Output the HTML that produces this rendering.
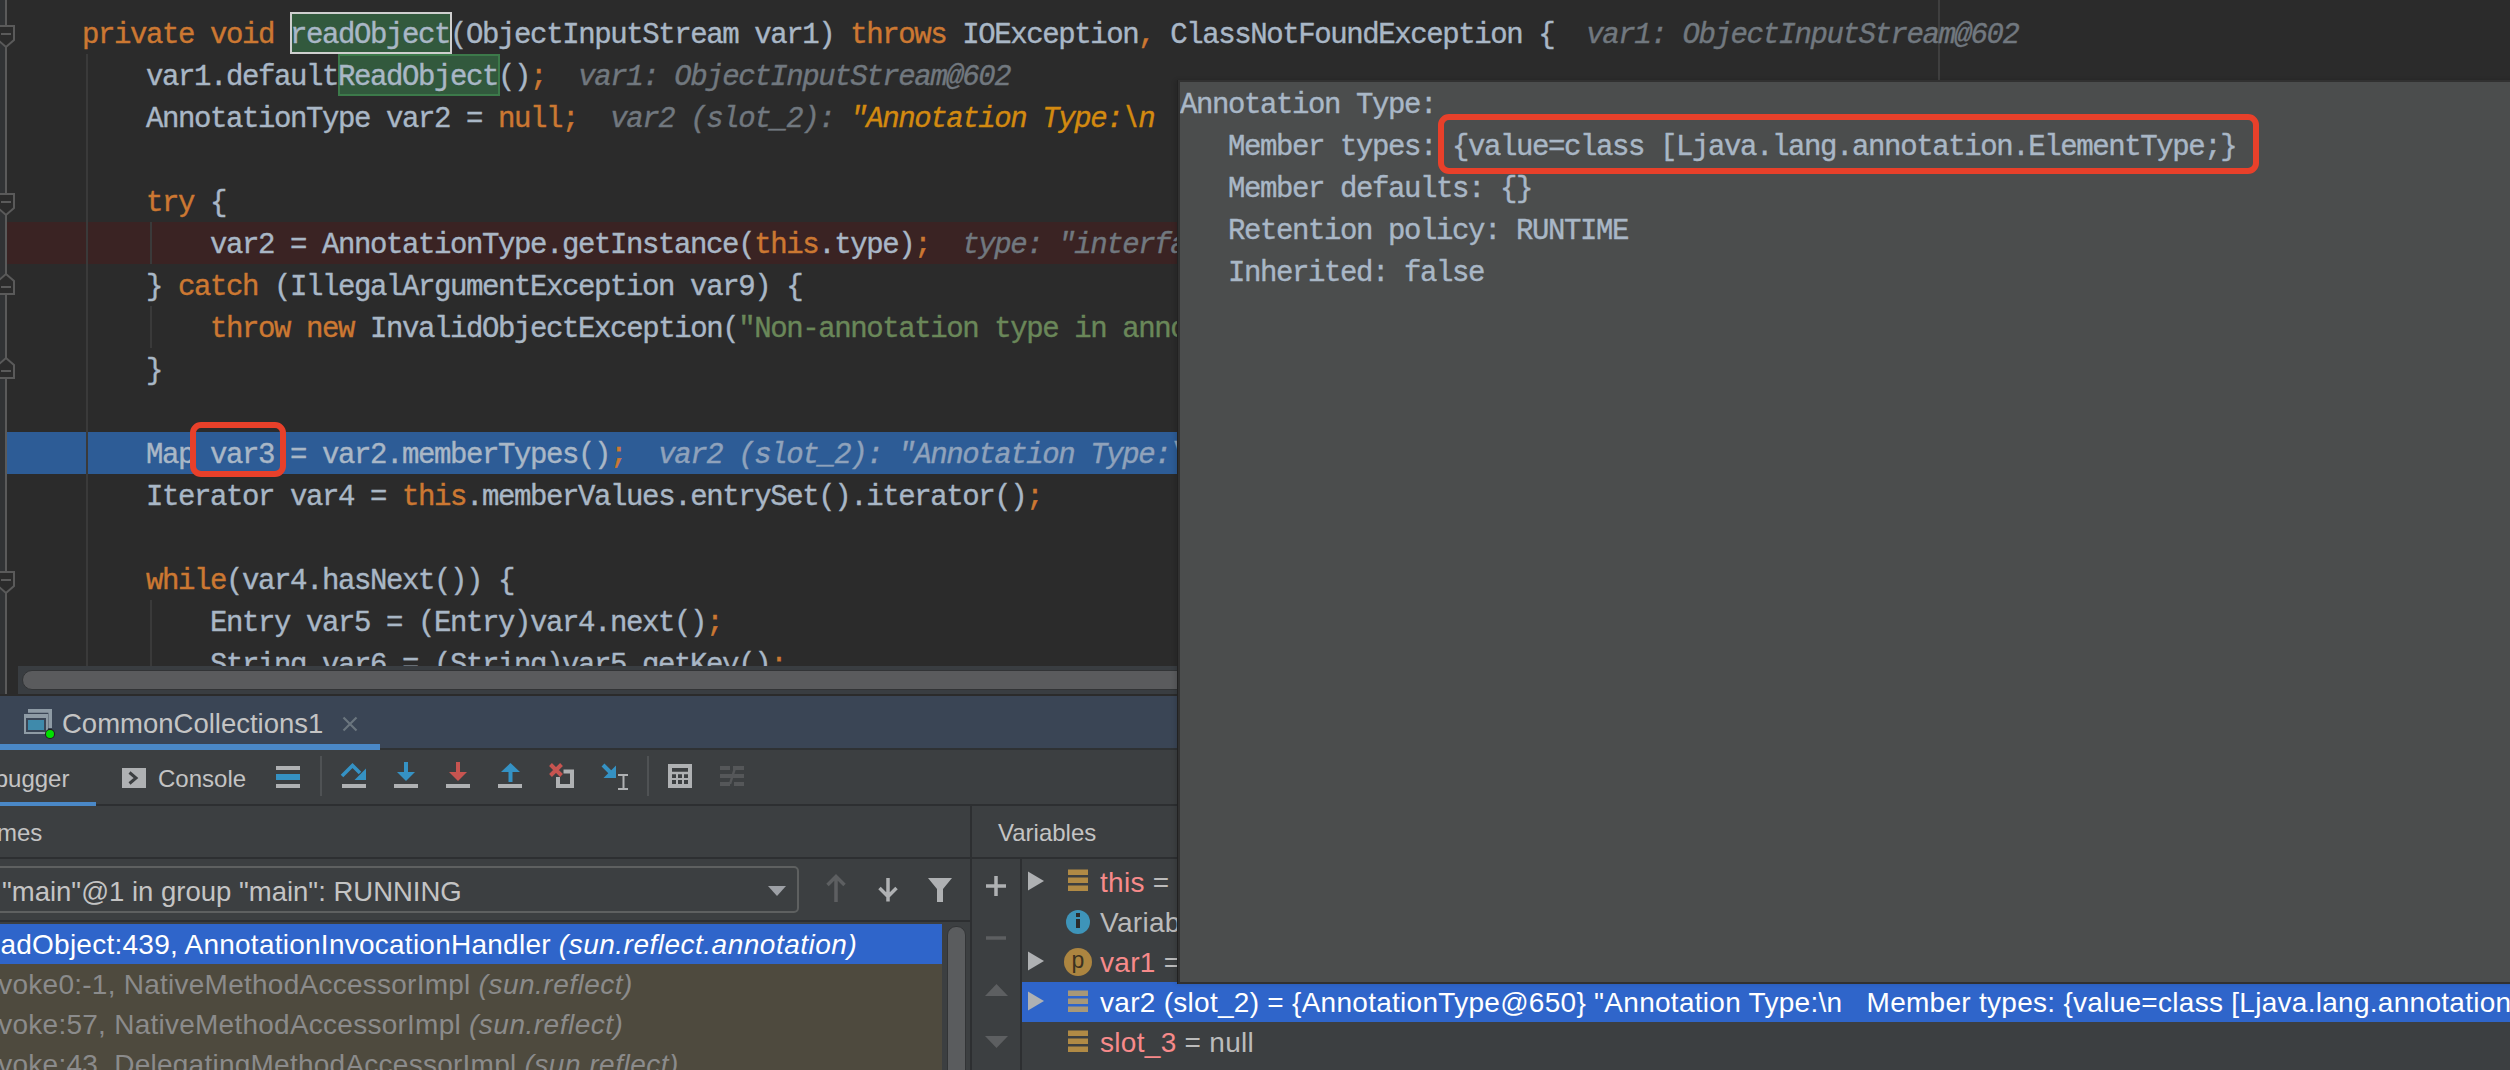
<!DOCTYPE html>
<html><head><meta charset="utf-8"><style>
*{margin:0;padding:0;box-sizing:border-box}
html,body{width:2510px;height:1070px;overflow:hidden;background:#2b2b2b}
#ed{position:absolute;left:0;top:0;width:2510px;height:695px;background:#2b2b2b;overflow:hidden}
.gut{position:absolute;left:0;top:0;width:7px;height:695px;background:#313335}
.fold{position:absolute;left:5px;top:0;width:2px;height:695px;background:#5a5a5a}
.lnbg{position:absolute;left:7px;height:42px}
.ln{position:absolute;left:18px;height:42px;line-height:42px;white-space:pre;font-family:"Liberation Mono",monospace;font-size:29px;letter-spacing:-1.4px;color:#a9b7c6;padding-top:3px;-webkit-text-stroke-width:0.4px}
.k{color:#cc7832}
.s{color:#6a8759}
.h{color:#71787f;font-style:italic}
.ho{color:#d38a10;font-style:italic}
.hb{color:#8fa2bb;font-style:italic}
.ig{position:absolute;width:2px;background:#3a3a3a}
.hl{position:absolute;background:#32593d}
#pop{position:absolute;left:1178px;top:80px;width:1340px;height:904px;background:#4b4d4d;border:2px solid #313131;overflow:hidden;box-shadow:-1px 0 0 #222,-3px 0 4px rgba(0,0,0,0.12)}
.pl{position:absolute;left:0px;height:42px;line-height:42px;white-space:pre;font-family:"Liberation Mono",monospace;font-size:29px;letter-spacing:-1.4px;color:#a9b7c6;padding-top:3px;-webkit-text-stroke-width:0.4px}
.red{position:absolute;border:6px solid #e8402a;border-radius:11px}
#dbg{position:absolute;left:0;top:695px;width:2510px;height:375px;background:#3c3f41;overflow:hidden;font-family:"Liberation Sans",sans-serif;color:#bbbbbb}
.t{position:absolute;white-space:pre;line-height:1}
</style></head><body>
<div id="ed">
<div class="gut"></div>
<div class="lnbg" style="top:222px;width:2503px;background:#3a2323"></div>
<div class="lnbg" style="top:432px;width:2503px;background:#2d5c96"></div>
<div class="abs" style="position:absolute;left:1938px;top:0;width:2px;height:695px;background:#3f3f3f"></div>
<div class="ig" style="left:86px;top:54px;height:641px"></div>
<div class="ig" style="left:150px;top:222px;height:42px"></div>
<div class="ig" style="left:150px;top:306px;height:42px"></div>
<div class="ig" style="left:150px;top:600px;height:95px"></div>
<div class="hl" style="left:290px;top:12px;width:162px;height:42px;border:2px solid #cfcfcf"></div>
<div class="hl" style="left:338px;top:54px;width:162px;height:42px;border:2px solid #3c7a4a"></div>
<div class="ln" style="top:12px">    <span class="k">private</span> <span class="k">void</span> readObject(ObjectInputStream var1) <span class="k">throws</span> IOException<span class="k">,</span> ClassNotFoundException {  <span class="h">var1: ObjectInputStream@602</span></div>
<div class="ln" style="top:54px">        var1.defaultReadObject()<span class="k">;</span>  <span class="h">var1: ObjectInputStream@602</span></div>
<div class="ln" style="top:96px">        AnnotationType var2 = <span class="k">null;</span>  <span class="h">var2 (slot_2): </span><span class="ho">&quot;Annotation Type:\n</span></div>
<div class="ln" style="top:138px"></div>
<div class="ln" style="top:180px">        <span class="k">try</span> {</div>
<div class="ln" style="top:222px">            var2 = AnnotationType.getInstance(<span class="k">this</span>.type)<span class="k">;</span>  <span class="h">type: &quot;interface java.lang.annotation.Target&quot;</span></div>
<div class="ln" style="top:264px">        } <span class="k">catch</span> (IllegalArgumentException var9) {</div>
<div class="ln" style="top:306px">            <span class="k">throw new</span> InvalidObjectException(<span class="s">&quot;Non-annotation type in annotation serial stream&quot;</span>)<span class="k">;</span></div>
<div class="ln" style="top:348px">        }</div>
<div class="ln" style="top:390px"></div>
<div class="ln" style="top:432px">        Map var3 = var2.memberTypes()<span class="k">;</span>  <span class="hb">var2 (slot_2): &quot;Annotation Type:\n   Member types</span></div>
<div class="ln" style="top:474px">        Iterator var4 = <span class="k">this</span>.memberValues.entrySet().iterator()<span class="k">;</span></div>
<div class="ln" style="top:516px"></div>
<div class="ln" style="top:558px">        <span class="k">while</span>(var4.hasNext()) {</div>
<div class="ln" style="top:600px">            Entry var5 = (Entry)var4.next()<span class="k">;</span></div>
<div class="ln" style="top:642px">            String var6 = (String)var5.getKey()<span class="k">;</span></div>
<div class="fold"></div>
<svg style="position:absolute;left:0;top:0" width="20" height="695"><path d="M-2 26 H14 V40 L6 47 L-2 40 Z" fill="#2b2b2b" stroke="#5a5a5a" stroke-width="2"/><path d="M1 34 H11" stroke="#5a5a5a" stroke-width="2"/><path d="M-2 194 H14 V208 L6 215 L-2 208 Z" fill="#2b2b2b" stroke="#5a5a5a" stroke-width="2"/><path d="M1 202 H11" stroke="#5a5a5a" stroke-width="2"/><path d="M-2 294 V281 L6 274 L14 281 V294 Z" fill="#2b2b2b" stroke="#5a5a5a" stroke-width="2"/><path d="M1 287 H11" stroke="#5a5a5a" stroke-width="2"/><path d="M-2 378 V365 L6 358 L14 365 V378 Z" fill="#2b2b2b" stroke="#5a5a5a" stroke-width="2"/><path d="M1 371 H11" stroke="#5a5a5a" stroke-width="2"/><path d="M-2 572 H14 V586 L6 593 L-2 586 Z" fill="#2b2b2b" stroke="#5a5a5a" stroke-width="2"/><path d="M1 580 H11" stroke="#5a5a5a" stroke-width="2"/></svg>
<div style="position:absolute;left:18px;top:666px;width:2500px;height:28px;background:#393d41"></div>
<div style="position:absolute;left:0;top:694px;width:2510px;height:1px;background:#2b2b2b"></div>
<div style="position:absolute;left:22px;top:670px;width:1500px;height:20px;background:#5a5b5d;border-radius:10px;border:1px solid #323436"></div>
</div>
<div id="dbg">
<div style="position:absolute;left:0px;top:0px;width:2510px;height:1px;background:#2b2b2b;"></div>
<div style="position:absolute;left:0px;top:1px;width:2510px;height:52px;background:#3a4555;"></div>
<div style="position:absolute;left:0px;top:53px;width:2510px;height:2px;background:#2f3234;"></div>
<div style="position:absolute;left:0px;top:49px;width:380px;height:6px;background:#4a88c7;"></div>
<svg style="position:absolute;left:0;top:0" width="400" height="60"><path d="M28 13.9 H52 V33 H48.4 V17.8 H28 Z" fill="#8e9ba5"/><path d="M24 19 H48 V39 H24 Z M26 23 V37 H46 V23 Z" fill="#8e9ba5" fill-rule="evenodd"/><rect x="28" y="25" width="16" height="10" fill="#3f8aab"/><circle cx="50" cy="39" r="5" fill="#1f1f1f"/><circle cx="50" cy="39" r="4" fill="#00e000"/><path d="M343.5 22.5 L356.5 35.5 M356.5 22.5 L343.5 35.5" stroke="#6a757e" stroke-width="2.2"/></svg>
<div class="t" style="left:62px;top:14.71px;font-size:27.5px;color:#c4c4c4;">CommonCollections1</div>
<div style="position:absolute;left:0px;top:109px;width:2510px;height:2px;background:#2d2f31;"></div>
<div style="position:absolute;left:0px;top:107px;width:96px;height:4px;background:#4a88c7;"></div>
<div class="t" style="left:-36px;top:71.67px;font-size:24px;color:#c4c4c4;">Debugger</div>
<div class="t" style="left:158px;top:71.67px;font-size:24px;color:#c4c4c4;">Console</div>
<svg style="position:absolute;left:0;top:0" width="800" height="110"><rect x="122" y="73" width="24" height="20" fill="#afb1b3"/><path d="M129.5 77.5 L136 83 L129.5 88.5" stroke="#3c3f41" stroke-width="3" fill="none"/><rect x="276" y="71" width="24" height="4" fill="#afb1b3"/><rect x="276" y="79" width="24" height="6" fill="#3592c4"/><rect x="276" y="89" width="24" height="4" fill="#afb1b3"/><rect x="320" y="61" width="2" height="40" fill="#4f5254"/><rect x="647" y="61" width="2" height="40" fill="#4f5254"/><path d="M342 81 L352.5 70.5 L360 78" stroke="#3592c4" stroke-width="3.6" fill="none"/><path d="M366 73.5 V85 H354.5 Z" fill="#3592c4"/><rect x="342" y="89" width="24" height="4" fill="#afb1b3"/><rect x="404" y="67" width="4" height="11" fill="#3592c4"/><path d="M397 77 H415 L406 86 Z" fill="#3592c4"/><rect x="394" y="89" width="24" height="4" fill="#afb1b3"/><rect x="456" y="67" width="4" height="11" fill="#c75450"/><path d="M449 77 H467 L458 86 Z" fill="#c75450"/><rect x="446" y="89" width="24" height="4" fill="#afb1b3"/><path d="M501 77 H520 L510.5 68 Z" fill="#3592c4"/><rect x="508.5" y="76" width="4" height="11" fill="#3592c4"/><rect x="498" y="89" width="24" height="4" fill="#afb1b3"/><path d="M563.5 76.5 H572 V91 H558 V82" stroke="#afb1b3" stroke-width="4" fill="none"/><path d="M550.5 69.5 L561.5 80.5 M561.5 69.5 L550.5 80.5" stroke="#c75450" stroke-width="4"/><path d="M603 70 L612 79" stroke="#3592c4" stroke-width="4"/><path d="M616 70.5 V83 H603.5 Z" fill="#3592c4"/><path d="M618 80 H628 M618 94 H628 M623.5 80 V94" stroke="#afb1b3" stroke-width="2" fill="none"/><path d="M668 69 H692 V93 H668 Z M672 73 V76.7 H688 V73 Z M672 79.3 V83 H676 V79.3 Z M678 79.3 V83 H682 V79.3 Z M684 79.3 V83 H688 V79.3 Z M672 85 V89 H676 V85 Z M678 85 V89 H682 V85 Z M684 85 V89 H688 V85 Z" fill="#afb1b3" fill-rule="evenodd"/><rect x="720" y="71" width="10" height="4" fill="#555759"/><rect x="733" y="71" width="11" height="4" fill="#555759"/><rect x="720" y="79" width="24" height="4" fill="#555759"/><rect x="720" y="87" width="10" height="4" fill="#555759"/><rect x="734" y="87" width="10" height="4" fill="#555759"/><path d="M735 73 L730 89" stroke="#555759" stroke-width="2.5"/></svg>
<div style="position:absolute;left:0px;top:162px;width:970px;height:2px;background:#2d2f31;"></div>
<div style="position:absolute;left:970px;top:111px;width:2px;height:264px;background:#2d2f31;"></div>
<div style="position:absolute;left:972px;top:162px;width:1540px;height:2px;background:#2d2f31;"></div>
<div class="t" style="left:-39px;top:125.67px;font-size:24px;color:#c4c4c4;">Frames</div>
<div class="t" style="left:998px;top:125.67px;font-size:24px;color:#c4c4c4;">Variables</div>
<div style="position:absolute;left:-12px;top:171px;width:811px;height:47px;border:2px solid #5e6060;border-radius:5px"></div>
<div class="t" style="left:2px;top:182.71px;font-size:27.5px;color:#c4c4c4;">"main"@1 in group "main": RUNNING</div>
<svg style="position:absolute;left:0;top:0" width="970" height="240"><path d="M768 191 H786 L777 201 Z" fill="#9da0a5"/><path d="M827.5 190 L836 181.5 L844.5 190 M836 182.5 V207" stroke="#5d5f61" stroke-width="3.5" fill="none"/><path d="M879.5 193 L888 201.5 L896.5 193 M888 183 V206.5" stroke="#afb1b3" stroke-width="3.5" fill="none"/><path d="M928 183 H952 L943 194 V207 H937 V194 Z" fill="#afb1b3"/></svg>
<div style="position:absolute;left:0px;top:225px;width:970px;height:2px;background:#2d2f31;"></div>
<div style="position:absolute;left:0px;top:229px;width:942px;height:40px;background:#2f65ca;"></div>
<div style="position:absolute;left:0px;top:269px;width:942px;height:40px;background:#4e4a3e;"></div>
<div style="position:absolute;left:0px;top:309px;width:942px;height:40px;background:#4e4a3e;"></div>
<div style="position:absolute;left:0px;top:349px;width:942px;height:40px;background:#4e4a3e;"></div>
<div style="position:absolute;left:947px;top:231px;width:19px;height:200px;background:#5a5c5e;border-radius:9px;border:1px solid #323436"></div>
<div class="t" style="left:-25px;top:236.28px;font-size:28px;color:#ffffff;letter-spacing:0.25px">readObject:439, AnnotationInvocationHandler <i style="letter-spacing:0.5px">(sun.reflect.annotation)</i></div>
<div class="t" style="left:-24px;top:276.28px;font-size:28px;color:#8b8b8b;letter-spacing:0.25px">invoke0:-1, NativeMethodAccessorImpl <i style="letter-spacing:0.5px">(sun.reflect)</i></div>
<div class="t" style="left:-24px;top:316.28px;font-size:28px;color:#8b8b8b;letter-spacing:0.25px">invoke:57, NativeMethodAccessorImpl <i style="letter-spacing:0.5px">(sun.reflect)</i></div>
<div class="t" style="left:-24px;top:356.28px;font-size:28px;color:#8b8b8b;letter-spacing:0.25px">invoke:43, DelegatingMethodAccessorImpl <i style="letter-spacing:0.5px">(sun.reflect)</i></div>
<div style="position:absolute;left:1020px;top:164px;width:2px;height:211px;background:#2d2f31;"></div>
<svg style="position:absolute;left:0;top:0" width="1022" height="375"><path d="M986 191 H1006 M996 181 V201" stroke="#afb1b3" stroke-width="3.5"/><path d="M986 243 H1006" stroke="#5d5f61" stroke-width="3.5"/><path d="M985 301 L996.5 289 L1008 301 Z" fill="#5d5f61"/><path d="M985 341 L996.5 353 L1008 341 Z" fill="#5d5f61"/></svg>
<div style="position:absolute;left:1022px;top:287px;width:1490px;height:40px;background:#2f65ca;"></div>
<svg style="position:absolute;left:0;top:0" width="1200" height="375"><path d="M1028 176.5 V195.5 L1044 186 Z" fill="#afb1b3"/><rect x="1068" y="174.5" width="20" height="5.5" fill="#b08a45"/><rect x="1068" y="182.5" width="20" height="5.5" fill="#b08a45"/><rect x="1068" y="190.5" width="20" height="5.5" fill="#b08a45"/><circle cx="1078" cy="227" r="12" fill="#3e94b9"/><rect x="1076" y="218" width="4" height="4" fill="#2b2b2b"/><rect x="1076" y="224" width="4" height="9" fill="#2b2b2b"/><path d="M1028 256.5 V275.5 L1044 266 Z" fill="#afb1b3"/><circle cx="1078" cy="267" r="14" fill="#ac8540"/><path d="M1028 296.5 V315.5 L1044 306 Z" fill="#afb1b3"/><rect x="1068" y="295.5" width="20" height="5.5" fill="#a89878"/><rect x="1068" y="303.5" width="20" height="5.5" fill="#a89878"/><rect x="1068" y="311.5" width="20" height="5.5" fill="#a89878"/><rect x="1068" y="335.5" width="20" height="5.5" fill="#b08a45"/><rect x="1068" y="343.5" width="20" height="5.5" fill="#b08a45"/><rect x="1068" y="351.5" width="20" height="5.5" fill="#b08a45"/></svg>
<div class="t" style="left:1071.5px;top:253.52px;font-size:23px;color:#3b3220;">p</div>
<div class="t" style="left:1100px;top:174.28px;font-size:28px;color:#f78a8a;letter-spacing:0.3px">this<span style="color:#bbbbbb"> = </span></div>
<div class="t" style="left:1100px;top:214.28px;font-size:28px;color:#bbbbbb;letter-spacing:0.3px">Variables debug info not available</div>
<div class="t" style="left:1100px;top:254.28px;font-size:28px;color:#f78a8a;letter-spacing:0.3px">var1<span style="color:#bbbbbb"> = </span></div>
<div class="t" style="left:1100px;top:294.28px;font-size:28px;color:#ffffff;letter-spacing:0.28px">var2 (slot_2) = {AnnotationType@650} &quot;Annotation Type:\n   Member types: {value=class [Ljava.lang.annotation.ElementType;}   Member defaults</div>
<div class="t" style="left:1100px;top:334.28px;font-size:28px;color:#f78a8a;letter-spacing:0.3px">slot_3<span style="color:#bbbbbb"> = null</span></div>
</div>
<div id="pop">
<div class="pl" style="top:0px">Annotation Type:</div>
<div class="pl" style="top:42px">   Member types: {value=class [Ljava.lang.annotation.ElementType;}</div>
<div class="pl" style="top:84px">   Member defaults: {}</div>
<div class="pl" style="top:126px">   Retention policy: RUNTIME</div>
<div class="pl" style="top:168px">   Inherited: false</div>
</div>
<div class="red" style="left:1438px;top:114px;width:821px;height:60px"></div>
<div class="red" style="left:190px;top:422px;width:96px;height:55px"></div>
</body></html>
